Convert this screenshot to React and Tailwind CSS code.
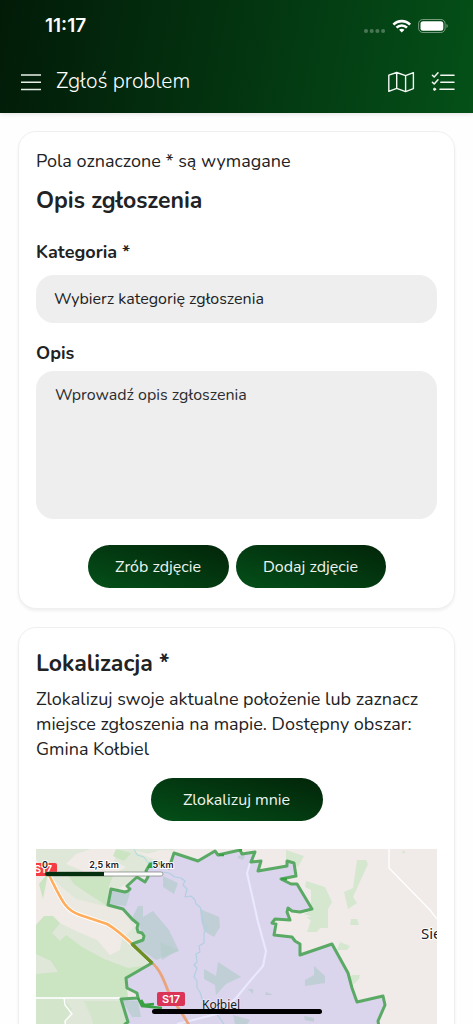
import React from "react";

const BORDER =
  "89,175 92,173 85,150 102,149 101,144 91,139 90,129 116,114 96,95 107,91 108,87 106,84 102,83 101,79 102,75 96,70 87,60 72,56 75,40 89,43 92,42 94,40 91,37 101,28 109,33 112,28 110,22 114,15 122,14 133,19 138,4 162,12 179,2 182,6 204,1 206,5 219,3 215,13 225,12 222,22 251,17 251,12 258,14 260,27 245,30 255,35 261,35 276,60 264,63 256,62 252,59 251,63 254,71 239,70 236,74 240,75 238,86 256,88 259,92 264,95 264,106 296,95 312,124 316,139 321,153 347,147 349,156 342,172 345,190 345,260 89,260";

function StatusIcons() {
  return (
    <svg className="h-6 w-[86px]" viewBox="0 0 86 24" aria-hidden="true">
      <g fill="#ffffff" fillOpacity="0.28">
        <circle cx="3" cy="17" r="2" />
        <circle cx="8.7" cy="17" r="2" />
        <circle cx="14.4" cy="17" r="2" />
        <circle cx="20.1" cy="17" r="2" />
      </g>
      <g fill="none" stroke="#ffffff" strokeWidth="2.6">
        <path d="M30.4 10.6c4.500-4.700 12.200-4.700 16.700 0" />
        <path d="M33.500 13.700c2.900-2.900 7.600-2.900 10.500 0" />
      </g>
      <path d="M38.750 18.600l-2.700-2.800c1.500-1.400 3.900-1.400 5.400 0z" fill="#ffffff" />
      <rect x="55.600" y="5.500" width="26.500" height="13" rx="4.200" fill="none" stroke="#ffffff" strokeOpacity="0.45" />
      <rect x="57.500" y="7.300" width="22.800" height="9.400" rx="2.500" fill="#ffffff" />
      <path d="M83.500 10v4c1.600-.6 1.600-3.400 0-4z" fill="#ffffff" fillOpacity="0.5" />
    </svg>
  );
}

function MenuIcon() {
  return (
    <svg className="h-6 w-6" viewBox="0 0 24 24" fill="none" stroke="#e8efe9" strokeWidth="1.500" aria-hidden="true">
      <path d="M2 5h20M2 12.200h20M2 19.500h20" />
    </svg>
  );
}

function MapIcon() {
  return (
    <svg className="h-6 w-7" viewBox="0 0 28 24" fill="none" stroke="#f3f7f4" strokeWidth="1.400" strokeLinejoin="round" aria-hidden="true">
      <path d="M1.800 5.200 9.700 2.500 18.600 5.700 26.400 2.600V18.600L18.600 21.600 9.700 18.400 1.800 21.400ZM9.700 2.500V18.400M18.600 5.700V21.600" />
    </svg>
  );
}

function ChecklistIcon() {
  return (
    <svg className="h-6 w-6" viewBox="0 0 24 24" fill="none" stroke="#f3f7f4" strokeWidth="1.500" strokeLinecap="round" strokeLinejoin="round" aria-hidden="true">
      <path d="M1.400 5.200 3.200 7 7 2.800M1.400 12.200 3.200 14 7 9.800M9.800 5.200H23M9.800 12.200H23M9 19.300H23" />
      <circle cx="3.600" cy="19.300" r="1.100" fill="#f3f7f4" strokeWidth="1" />
    </svg>
  );
}

function AreaMap() {
  return (
    <svg
      className="h-[260px] w-full"
      viewBox="0 0 401 260"
      preserveAspectRatio="xMidYMin slice"
      role="img"
      aria-label="Mapa: Gmina Kołbiel"
    >
      <rect width="401" height="260" fill="#f0ebe9" />
      <path d="M0 0H140L75 45 90 65 105 85 120 115 90 130V260H0Z" fill="#dfe7d9" />
      <path d="M0 10 14 28 28 55 45 67 70 77 86 90 84 101 74 106 61 91 40 82 12 68 0 76Z" fill="#f1ebe8" />
      <path d="M14 28 40 50 64 56 88 62 98 78 86 90 70 77 45 67 28 55Z" fill="#efeae6" fillOpacity="0.700" />
      <path d="M40 5 55 0H82L78 12 90 18 80 24H52L30 15Z" fill="#f1ebe8" />
      <path d="M96 1 112 5 124 1 160 2 138 10 124 12 112 8Z" fill="#f1ebe8" />
      <g fill="#cbe4c1">
        <path d="M0 76 8 67 17 67 24 74 16 84 24 92 30 86 46 98 68 110 92 119 114 116 90 132 92 148H0V125L22 123 15 112 0 105Z" />
        <path d="M31 25H78L73 36 71 57 48 42 38 35Z" />
        <path d="M80 0 95 4 88 12 77 7ZM3 35 12 24 7 50Z" />
        <path d="M0 150H28L36 160 27 175 32 260H0Z" fillOpacity="0.6" />
        <path d="M48 152H85L92 173 85 190H60L56 170Z" fillOpacity="0.6" />
      </g>
      <g fill="#d5e7cf">
        <path d="M270 32 289 38 296 53 292 60V79H284L281 83H271L276 68 268 65 275 62V41L269 38Z" />
        <path d="M321 11H330L332 15 317 48 321 54 312 60 308 43 317 39Z" />
        <path d="M315 70H321L323 76H314ZM304 93 314 97 311 101H301ZM316 126H324L323 130 318 135 312 130ZM250 1 268 7 262 18 250 13ZM367 1 370 4H366Z" />
        <path d="M270 68H276V72Z" />
      </g>
      <path d="M98 0 101 6 108 8 112 14 121 11 128 16 138 20" fill="none" stroke="#aedbe0" strokeWidth="1" />
      <g fill="none" stroke="#ffffff" strokeWidth="1.300">
        <path d="M0 149H85M28 149 29 156 36 165 29 172 31 190M353 0V19L394 61 401 70" />
        <path d="M12 24C26 52 29 61 44 66L71 75C82 81 98 96 116 114" strokeWidth="4.500" />
      </g>
      <path d="M12 24C26 52 29 61 44 66L71 75C82 81 98 96 116 114C124 120 128 132 133 144 139 155 145 162 153 176" fill="none" stroke="#ffad5c" strokeWidth="2.600" />
      <polygon points={BORDER} fill="#c9c5f1" fillOpacity="0.620" />
      <polygon points={BORDER} fill="#dad4ec" fillOpacity="0.850" />
      <g fill="#b5cdcb" fillOpacity="0.700">
        <path d="M75 42 94 44 90 57 73 55ZM102 57H107V68L117 62 133 81 143 102 120 111 97 95 108 89 102 75 95 71Z" />
        <path d="M127 27 142 34 138 45 127 38ZM164 60 183 68 184 78 178 88 168 82 165 71ZM124 93 142 101 126 111ZM182 113 205 128 190 135 180 146 179 136 168 130 168 120 180 127Z" />
        <path d="M278 117 289 127V134L269 137V131L278 126ZM212 140 217 140V145ZM230 143 237 146H229ZM197 166 214 171 207 181 200 179ZM268 167 278 169V173L269 171ZM202 7 209 6 207 11 202 9ZM86 151 102 152 105 168H96Z" />
      </g>
      <path d="M126 23 133 24 139 28 145 29 149 32 147 36 151 40 149 48 155 47 159 51 160 55 164 58 166 65 167 74 171 79 168 84 168 94 163 97 164 103 160 105 161 113 158 116 161 119 158 128 161 132 161 139 164 143 166 150 171 157 180 164 188 175" fill="none" stroke="#b1cfe1" strokeWidth="1.100" strokeLinejoin="round" />
      <path d="M214 14 211 24 222 73 230 102 227 117 214 132 201 148 184 164 165 169 141 175" fill="none" stroke="#e9e8fc" strokeWidth="2.200" />
      <path d="M116 114C124 120 128 132 133 144 139 155 145 162 153 176" fill="none" stroke="#eaa47c" strokeWidth="2.800" />
      <polygon points={BORDER} fill="none" stroke="#5aaa65" strokeWidth="3" strokeLinejoin="round" />
      <path d="M96 95 116 114" stroke="#6d8f21" strokeWidth="3.200" />
      <path d="M102 149 106 157 126 159M105 151 108 156 118 155M245 30H251M183 6H188M203 1H206" fill="none" stroke="#39a044" strokeWidth="2.600" />
      <path d="M111 19 114 14 121 14 119 19Z" fill="#39a044" />
      <g fontFamily="Inter, sans-serif" textAnchor="middle">
        <rect x="-10" y="14" width="31" height="13" rx="2" fill="#f43c42" />
        <text x="7" y="24" fontSize="11" fontWeight="600" fill="#ffffff">S17</text>
        <rect x="121" y="143" width="28" height="14" rx="2" fill="#da3557" />
        <text x="135" y="154" fontSize="11" fontWeight="600" fill="#ffffff">S17</text>
      </g>
      <g fill="#202124" stroke="#ffffff" strokeWidth="2" paintOrder="stroke" strokeLinejoin="round">
        <text x="166" y="160" fontSize="12" fontFamily="Noto Sans, sans-serif" strokeOpacity="0.350">Kołbiel</text>
        <text x="385" y="90" fontSize="15" fontFamily="Noto Sans, sans-serif">Siennica</text>
        <g fontFamily="Inter, sans-serif" fontSize="9" fontWeight="600" textAnchor="middle">
          <text x="9" y="19">0</text>
          <text x="68" y="19">2,5 km</text>
          <text x="127" y="19">5 km</text>
        </g>
      </g>
      <rect x="9" y="23" width="118" height="4" rx="2" fill="#ffffff" stroke="#777d78" strokeWidth="0.700" />
      <path d="M11 23H68V27H11A2 2 0 0 1 11 23Z" fill="#05300f" />
    </svg>
  );
}

function PillButton({ children, className }) {
  return (
    <button
      type="button"
      className={`h-[43px] rounded-full bg-linear-to-bl from-[#022509] to-[#045019] text-base text-[#eef4ef] ${className}`}
    >
      {children}
    </button>
  );
}

function Card({ children }) {
  return (
    <section className="rounded-[18px] border border-[#efefef] bg-white px-[17px] pt-[17px] pb-5 shadow-[0_2px_3px_rgba(0,0,0,0.06)]">
      {children}
    </section>
  );
}

export default function App() {
  return (
    <div className="relative flex h-dvh flex-col bg-[#fefefe] font-['Nunito','Lato',sans-serif] text-[#212224]">
      <header className="z-10 h-[113px] shrink-0 bg-linear-100 from-[#021b08] to-[#045018] text-white shadow-[0_1px_5px_rgba(0,0,0,0.12)]">
        <div className="flex h-[52px] items-center justify-between pr-6 pl-[45px]">
          <span className="font-['Inter',sans-serif] text-[19px] font-semibold">11:17</span>
          <StatusIcons />
        </div>
        <div className="flex h-[60px] items-center pr-[18px] pl-[19px]">
          <button type="button" aria-label="Menu">
            <MenuIcon />
          </button>
          <h1 className="ml-[13px] flex-1 text-[21px] font-light text-white">Zgłoś problem</h1>
          <button type="button" aria-label="Mapa" className="mr-4">
            <MapIcon />
          </button>
          <button type="button" aria-label="Lista zgłoszeń">
            <ChecklistIcon />
          </button>
        </div>
      </header>

      <main className="flex min-h-0 flex-1 flex-col gap-[18px] overflow-y-auto px-[18px] py-[18px] [scrollbar-width:none]">
        <Card>
          <p className="text-lg leading-[25px]">Pola oznaczone * są wymagane</p>
          <h2 className="mt-3 text-[23px] leading-[30px] font-bold">Opis zgłoszenia</h2>
          <label htmlFor="category" className="mt-6 block text-lg leading-6 font-bold">
            Kategoria *
          </label>
          <select
            id="category"
            className="mt-[11px] block h-12 w-full appearance-none rounded-[18px] bg-[#eeeeee] px-[18px] text-base"
          >
            <option>Wybierz kategorię zgłoszenia</option>
          </select>
          <label htmlFor="description" className="mt-[18px] block text-lg leading-6 font-bold">
            Opis
          </label>
          <textarea
            id="description"
            placeholder="Wprowadź opis zgłoszenia"
            className="mt-[6px] block h-[148px] w-full resize-none rounded-[18px] bg-[#eeeeee] px-[19px] py-3 text-base placeholder:text-[#2b2c2e]"
          />
          <div className="mt-[26px] flex justify-center gap-[7px]">
            <PillButton className="w-[141px]">Zrób zdjęcie</PillButton>
            <PillButton className="w-[150px]">Dodaj zdjęcie</PillButton>
          </div>
        </Card>

        <Card>
          <h2 className="pt-1 text-[23px] leading-[30px] font-bold">Lokalizacja *</h2>
          <p className="mt-2 text-lg leading-[25px]">
            Zlokalizuj swoje aktualne położenie lub zaznacz miejsce zgłoszenia na mapie. Dostępny obszar: Gmina Kołbiel
          </p>
          <div className="mt-4 flex justify-center">
            <PillButton className="w-[172px]">Zlokalizuj mnie</PillButton>
          </div>
          <div className="mt-7">
            <AreaMap />
          </div>
        </Card>
      </main>

      <div className="absolute bottom-[10px] left-1/2 z-20 h-[5px] w-[170px] -translate-x-1/2 rounded-full bg-black" />
    </div>
  );
}
